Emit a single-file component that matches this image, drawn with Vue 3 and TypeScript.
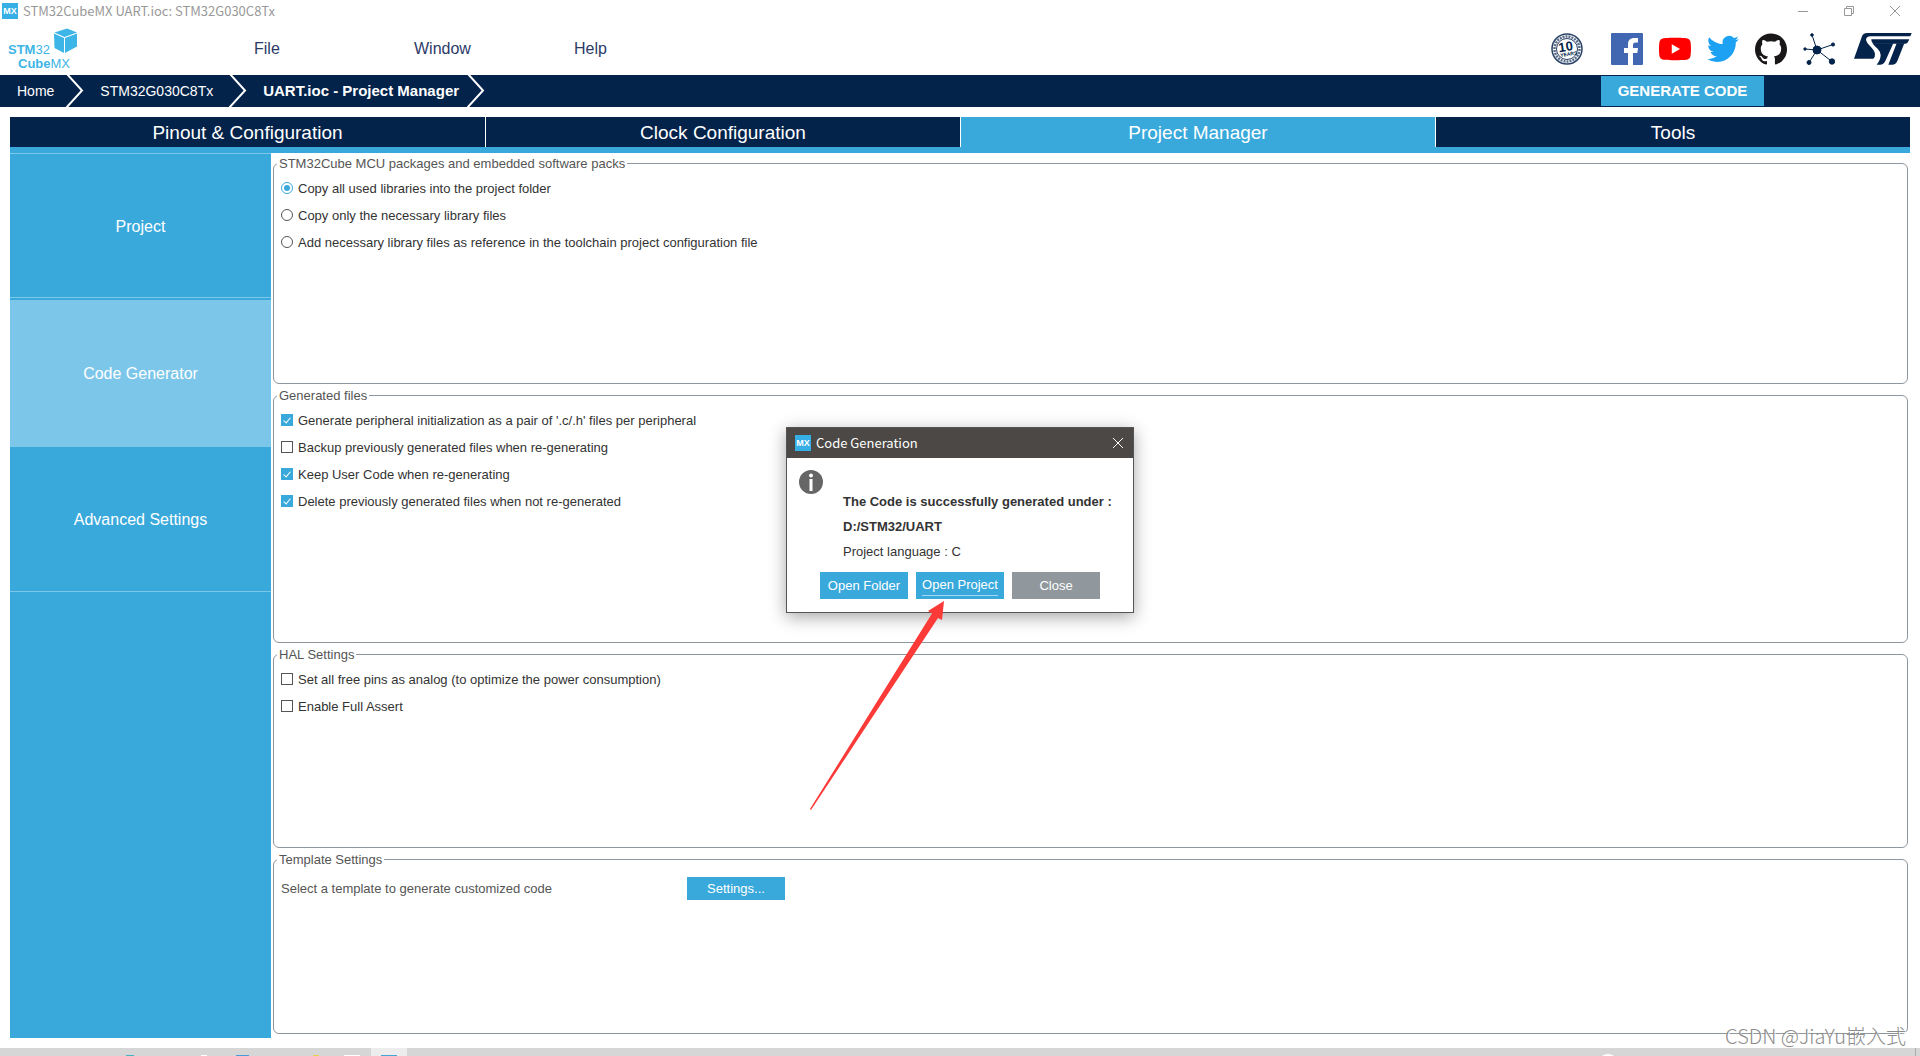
<script setup lang="ts">
import { ref } from 'vue'

interface Option {
  id: string
  label: string
  checked: boolean
}

const menus: string[] = ['File', 'Window', 'Help']
const crumbs: string[] = ['Home', 'STM32G030C8Tx', 'UART.ioc - Project Manager']
const tabs: string[] = ['Pinout & Configuration', 'Clock Configuration', 'Project Manager', 'Tools']
const activeTab = ref('Project Manager')
const sections: string[] = ['Project', 'Code Generator', 'Advanced Settings']
const activeSection = ref('Code Generator')

const copyMode = ref('all')
const copyModes = [
  { id: 'all', label: 'Copy all used libraries into the project folder' },
  { id: 'necessary', label: 'Copy only the necessary library files' },
  { id: 'reference', label: 'Add necessary library files as reference in the toolchain project configuration file' },
]

const generated = ref<Option[]>([
  { id: 'pair', label: "Generate peripheral initialization as a pair of '.c/.h' files per peripheral", checked: true },
  { id: 'backup', label: 'Backup previously generated files when re-generating', checked: false },
  { id: 'keep', label: 'Keep User Code when re-generating', checked: true },
  { id: 'delete', label: 'Delete previously generated files when not re-generated', checked: true },
])

const hal = ref<Option[]>([
  { id: 'analog', label: 'Set all free pins as analog (to optimize the power consumption)', checked: false },
  { id: 'assert', label: 'Enable Full Assert', checked: false },
])
</script>

<template>
  <div class="app">
    <div class="titlebar">
      <span class="mx">MX</span>
      <span class="title">STM32CubeMX UART.ioc: STM32G030C8Tx</span>
      <div class="window-controls">
        <button type="button" aria-label="Minimize">
          <svg width="10" height="10" viewBox="0 0 10 10"><path d="M0 5.5H10" /></svg>
        </button>
        <button type="button" aria-label="Restore">
          <svg width="10" height="10" viewBox="0 0 10 10"><path d="M.5 2.500H7.500V9.500H.5ZM2.500 2.500V.5H9.500V7.500H7.500" /></svg>
        </button>
        <button type="button" aria-label="Close">
          <svg width="10" height="10" viewBox="0 0 10 10"><path d="M0 0L10 10M10 0L0 10" /></svg>
        </button>
      </div>
    </div>

    <header class="header">
      <div class="brand">
        <svg width="90" height="53" viewBox="0 0 90 53" aria-label="STM32CubeMX">
          <path d="M54.500 10.500L67 6.500L77 10.500L64.500 15Z" fill="#3db5e6" />
          <path d="M54 11.500L64 16V31L54.500 26Z" fill="#3db5e6" />
          <path d="M65 16L77 11.500V24.500L65 31Z" fill="#3db5e6" />
          <text x="8" y="32" class="logo-text"><tspan class="strong">STM</tspan>32</text>
          <text x="18" y="46" class="logo-text"><tspan class="strong">Cube</tspan>MX</text>
        </svg>
      </div>
      <nav class="menu">
        <button v-for="m in menus" :key="m" type="button">{{ m }}</button>
      </nav>
      <div class="links">
        <a href="#" class="badge" aria-label="10 years commitment">
          <svg width="32" height="32" viewBox="0 0 32 32">
            <circle cx="16" cy="16" r="15" fill="#fff" stroke="#2b4366" stroke-width="1.500" />
            <circle cx="16" cy="16" r="12.500" fill="none" stroke="#5a6d89" stroke-width="2.500" stroke-dasharray="2 1" />
            <circle cx="16" cy="16" r="10.500" fill="#fff" stroke="#2b4366" />
            <text x="15" y="18" class="badge-ten" transform="rotate(-8 16 16)">10</text>
            <text x="17" y="23" class="badge-years" transform="rotate(-8 16 16)">YEARS</text>
          </svg>
        </a>
        <a href="#" aria-label="Facebook">
          <svg width="32" height="32" viewBox="0 0 32 32">
            <rect width="32" height="32" rx="1" fill="#4267b2" />
            <path d="M17 32V20H13V15H17V11.500C17 7 19.500 5 23.500 5H27V9.500H25C22.500 9.500 22 10.500 22 12.500V15H27L26.300 20H22V32Z" fill="#fff" />
          </svg>
        </a>
        <a href="#" aria-label="YouTube">
          <svg width="32" height="32" viewBox="0 0 24 24">
            <path fill="#f00" d="M23.498 6.186a3.016 3.016 0 0 0-2.122-2.136C19.505 3.545 12 3.545 12 3.545s-7.505 0-9.377.505A3.017 3.017 0 0 0 .502 6.186C0 8.070 0 12 0 12s0 3.930.502 5.814a3.016 3.016 0 0 0 2.122 2.136c1.871.505 9.376.505 9.376.505s7.505 0 9.377-.505a3.015 3.015 0 0 0 2.122-2.136C24 15.930 24 12 24 12s0-3.930-.502-5.814z" />
            <path fill="#fff" d="M9.545 15.568V8.432L15.818 12z" />
          </svg>
        </a>
        <a href="#" aria-label="Twitter">
          <svg width="32" height="32" viewBox="0 0 24 24">
            <path fill="#1da1f2" d="M23.953 4.570a10 10 0 0 1-2.825.775 4.958 4.958 0 0 0 2.163-2.723c-.951.555-2.005.959-3.127 1.184a4.920 4.920 0 0 0-8.384 4.482C7.690 8.095 4.067 6.130 1.640 3.162a4.822 4.822 0 0 0-.666 2.475c0 1.710.870 3.213 2.188 4.096a4.904 4.904 0 0 1-2.228-.616v.060a4.923 4.923 0 0 0 3.946 4.827 4.996 4.996 0 0 1-2.212.085 4.936 4.936 0 0 0 4.604 3.417 9.867 9.867 0 0 1-6.102 2.105c-.39 0-.779-.023-1.170-.067a13.995 13.995 0 0 0 7.557 2.209c9.053 0 13.998-7.496 13.998-13.985 0-.21 0-.42-.015-.63A9.935 9.935 0 0 0 24 4.590z" />
          </svg>
        </a>
        <a href="#" aria-label="GitHub">
          <svg width="32" height="32" viewBox="0 0 24 24">
            <path fill="#191717" d="M12 .297c-6.630 0-12 5.373-12 12 0 5.303 3.438 9.800 8.205 11.385.6.113.820-.258.820-.577 0-.285-.010-1.040-.015-2.040-3.338.724-4.042-1.610-4.042-1.610C4.422 18.070 3.633 17.700 3.633 17.700c-1.087-.744.084-.729.084-.729 1.205.084 1.838 1.236 1.838 1.236 1.070 1.835 2.809 1.305 3.495.998.108-.776.417-1.305.760-1.605-2.665-.3-5.466-1.332-5.466-5.930 0-1.310.465-2.380 1.235-3.220-.135-.303-.540-1.523.105-3.176 0 0 1.005-.322 3.300 1.230.960-.267 1.980-.399 3-.405 1.020.006 2.040.138 3 .405 2.280-1.552 3.285-1.230 3.285-1.230.645 1.653.240 2.873.120 3.176.765.840 1.230 1.910 1.230 3.220 0 4.610-2.805 5.625-5.475 5.920.420.360.810 1.096.810 2.220 0 1.606-.015 2.896-.015 3.286 0 .315.210.690.825.570C20.565 22.092 24 17.592 24 12.297c0-6.627-5.373-12-12-12" />
          </svg>
        </a>
        <a href="#" aria-label="Community">
          <svg width="32" height="32" viewBox="0 0 32 32" fill="#03234b" stroke="#03234b" stroke-width="1">
            <path d="M14 17L9 2M14 17L30 11.500M14 17L2 16M14 17L6 29.500M14 17L29 28.500" />
            <circle cx="14" cy="17" r="4" />
            <circle cx="9" cy="2" r="1.300" />
            <circle cx="30" cy="11.500" r="1.600" />
            <circle cx="2" cy="16" r="1.200" />
            <circle cx="6" cy="29.500" r="2" />
            <circle cx="29" cy="28.500" r="2.700" />
          </svg>
        </a>
        <a href="#" class="st" aria-label="STMicroelectronics">
          <svg width="58" height="32" viewBox="0 0 174 96" fill="#03234b">
            <path d="M0 77L24 10Q28 0 40 0H173L169 10H50Q36 11 36 21Q38 30 48 39Q61 52 63 62Q64 71 58 77Z" />
            <path d="M56 31H118L94 84Q89 95 78 95H68Q79 83 80 67Q80 56 71 47Q58 37 56 31Z" />
            <path d="M52 19H166L162 27Q159 32 154 32H57Q51 26 52 19Z" />
            <path d="M128 31H151L130 84Q126 95 114 95H103Z" />
          </svg>
        </a>
      </div>
    </header>

    <div class="navbar">
      <a v-for="(c, i) in crumbs" :key="c" href="#" class="crumb" :class="{ current: i === crumbs.length - 1 }">
        <span>{{ c }}</span>
        <svg width="18" height="32" viewBox="0 0 18 32"><path d="M1 -1L16 15.500L0 33" /></svg>
      </a>
      <button type="button" class="generate">GENERATE CODE</button>
    </div>

    <main class="content">
      <div class="tabs" role="tablist">
        <button
          v-for="t in tabs"
          :key="t"
          type="button"
          role="tab"
          :aria-selected="t === activeTab"
          :class="{ active: t === activeTab }"
          @click="activeTab = t"
        >{{ t }}</button>
      </div>

      <div class="workspace">
        <aside class="sidebar">
          <button
            v-for="s in sections"
            :key="s"
            type="button"
            :class="{ active: s === activeSection }"
            @click="activeSection = s"
          >{{ s }}</button>
        </aside>

        <form class="groups" @submit.prevent>
          <fieldset>
            <legend>STM32Cube MCU packages and embedded software packs</legend>
            <label v-for="m in copyModes" :key="m.id" class="row">
              <input v-model="copyMode" type="radio" name="copy-mode" :value="m.id" />
              <span>{{ m.label }}</span>
            </label>
          </fieldset>
          <fieldset>
            <legend>Generated files</legend>
            <label v-for="o in generated" :key="o.id" class="row">
              <input v-model="o.checked" type="checkbox" />
              <span>{{ o.label }}</span>
            </label>
          </fieldset>
          <fieldset>
            <legend>HAL Settings</legend>
            <label v-for="o in hal" :key="o.id" class="row">
              <input v-model="o.checked" type="checkbox" />
              <span>{{ o.label }}</span>
            </label>
          </fieldset>
          <fieldset>
            <legend>Template Settings</legend>
            <div class="template">
              <span>Select a template to generate customized code</span>
              <button type="button">Settings...</button>
            </div>
          </fieldset>
        </form>
      </div>
    </main>

    <footer class="taskbar">
      <svg width="420" height="8" viewBox="0 0 420 8">
        <rect x="371" width="36" height="8" fill="#ededed" />
        <rect x="126" y="7" width="8" height="1" fill="#45b5c4" />
        <rect x="201" y="7" width="6" height="1" fill="#fff" />
        <rect x="236" y="7" width="13" height="1" fill="#4a9bd9" />
        <rect x="313" y="7" width="6" height="1" fill="#e6d34d" />
        <rect x="344" y="7" width="16" height="1" fill="#fff" />
        <rect x="381" y="7" width="16" height="1" fill="#45a5d5" />
      </svg>
      <svg class="tray" width="320" height="8" viewBox="0 0 320 8">
        <circle cx="8" cy="16" r="10" fill="#fff" />
        <rect x="315" width="1" height="8" fill="#aaa" />
      </svg>
    </footer>

    <div class="watermark">CSDN @JiaYu嵌入式</div>

    <section class="dialog" role="dialog" aria-labelledby="dialog-title">
      <div class="dialog-bar">
        <span class="mx">MX</span>
        <span id="dialog-title" class="title">Code Generation</span>
        <button type="button" aria-label="Close dialog">
          <svg width="10" height="10" viewBox="0 0 10 10"><path d="M0 0L10 10M10 0L0 10" /></svg>
        </button>
      </div>
      <div class="dialog-body">
        <svg class="info" width="24" height="24" viewBox="0 0 24 24">
          <circle cx="12" cy="12" r="12" fill="#666" />
          <circle cx="12" cy="5.500" r="2" fill="#fff" />
          <rect x="10.500" y="9" width="3" height="12" fill="#fff" />
        </svg>
        <div class="message">
          <p><strong>The Code is successfully generated under :</strong></p>
          <p><strong>D:/STM32/UART</strong></p>
          <p>Project language : C</p>
        </div>
      </div>
      <div class="dialog-actions">
        <button type="button">Open Folder</button>
        <button type="button" class="focused"><span>Open Project</span></button>
        <button type="button" class="secondary">Close</button>
      </div>
      <svg class="arrow" width="140" height="212" viewBox="0 0 140 212">
        <path d="M136 0L120 10L124 12.500L2 208L3 209L130 17L134 19Z" fill="#fc3a38" />
      </svg>
    </section>
  </div>
</template>

<style>
body {
  margin: 0;
  background: #fff;
}
</style>

<style scoped>
.app {
  display: flex;
  flex-direction: column;
  position: relative;
  min-height: 100vh;
  overflow: hidden;
  box-sizing: border-box;
  background: #fff;
  color: #333;
  font: 13px/16px "Liberation Sans", Arial, sans-serif;
}

button {
  margin: 0;
  padding: 0;
  border: 0;
  background: none;
  color: inherit;
  font: inherit;
}

a {
  color: inherit;
  text-decoration: none;
}

svg {
  display: block;
}

.mx {
  width: 16px;
  height: 16px;
  background: #36b0e4;
  color: #fff;
  font: bold 9px/16px "Liberation Sans", sans-serif;
  text-align: center;
}

.titlebar {
  display: flex;
  align-items: center;
  height: 22px;
  padding-left: 2px;
  color: #999;
}

.title {
  margin-left: 5px;
  font: 13px/16px "Noto Sans CJK SC", "Noto Sans", sans-serif;
}

.window-controls {
  display: flex;
  height: 20px;
  margin-left: auto;
  padding-right: 2px;
}

.window-controls button {
  display: grid;
  place-items: center;
  width: 46px;
}

.window-controls path {
  fill: none;
  stroke: #999;
}

.header {
  display: flex;
  align-items: center;
  height: 53px;
}

.brand {
  width: 254px;
}

.logo-text {
  font: 13px "Liberation Sans", sans-serif;
  fill: #3db5e6;
}

.logo-text .strong {
  font-weight: bold;
}

.menu {
  display: flex;
}

.menu button {
  width: 160px;
  color: #2b3a66;
  font-size: 16px;
  line-height: 20px;
  text-align: left;
}

.links {
  display: flex;
  gap: 16px;
  margin-left: auto;
  padding-right: 8px;
}

.links .badge {
  margin-right: 12px;
}

.links .st {
  margin-left: 3px;
}

.badge-ten {
  font: bold 13px "Liberation Sans", sans-serif;
  fill: #03234b;
  text-anchor: middle;
}

.badge-years {
  font: bold 5px "Liberation Sans", sans-serif;
  fill: #03234b;
  text-anchor: middle;
}

.navbar {
  display: flex;
  align-items: center;
  height: 32px;
  padding-left: 17px;
  background: #03234b;
  color: #fff;
  font-size: 14px;
}

.crumb {
  display: flex;
  align-items: center;
  gap: 12px;
  margin-right: 16px;
}

.crumb + .crumb {
  gap: 16px;
}

.crumb.current {
  gap: 8px;
  font-size: 15px;
  font-weight: bold;
}

.crumb path {
  fill: none;
  stroke: #fff;
  stroke-width: 2;
}

.generate {
  width: 163px;
  height: 30px;
  margin-left: auto;
  margin-right: 156px;
  background: #39a9dc;
  font-size: 15px;
  font-weight: bold;
}

.content {
  display: flex;
  flex: 1;
  flex-direction: column;
  padding: 10px;
}

.tabs {
  display: grid;
  grid-template-columns: repeat(4, 1fr);
  border-bottom: 6px solid #39a9dc;
}

.tabs button {
  height: 30px;
  padding-top: 2px;
  border-left: 1px solid #fff;
  background: #03234b;
  color: #fff;
  font-size: 19px;
  line-height: 28px;
}

.tabs button:first-child {
  border-left: 0;
}

.tabs button.active {
  background: #39a9dc;
}

.workspace {
  display: flex;
  flex: 1;
}

.sidebar {
  display: flex;
  flex-direction: column;
  width: 261px;
  border-top: 1px solid #7cc6ea;
  box-sizing: border-box;
  background: #39a9dc;
  color: #fff;
}

.sidebar button {
  height: 145px;
  padding-top: 2px;
  border-bottom: 1px solid #7cc6ea;
  font-size: 16px;
}

.sidebar button:first-child {
  height: 144px;
}

.sidebar button.active {
  height: 147px;
  margin-top: 2px;
  padding-top: 0;
  border-bottom: 0;
  background: #7cc6ea;
}

.groups {
  display: grid;
  flex: 1;
  grid-template-rows: 229fr 256fr 202fr 183fr;
  gap: 3px;
  padding: 2px 2px 4px;
}

fieldset {
  min-width: 0;
  margin: 0;
  padding: 3px 7px 0;
  border: 1px solid #8f979e;
  border-radius: 6px;
}

legend {
  height: 16px;
  margin-left: -4px;
  padding-right: 2px;
  color: #555;
  line-height: 18px;
}

.row {
  display: flex;
  gap: 5px;
  width: fit-content;
  height: 27px;
  padding-top: 6px;
  box-sizing: border-box;
  line-height: 18px;
}

.row input {
  display: grid;
  place-items: center;
  width: 12px;
  height: 12px;
  margin: 2px 0 0;
  border: 1px solid #555;
  appearance: none;
  box-sizing: border-box;
  background: #fff;
}

.row input[type="radio"] {
  border-radius: 50%;
}

.row input:checked {
  border-color: #39a9dc;
}

.row input[type="radio"]:checked::after {
  width: 6px;
  height: 6px;
  border-radius: 50%;
  background: #39a9dc;
  content: "";
}

.row input[type="checkbox"]:checked {
  background: #39a9dc;
}

.row input[type="checkbox"]:checked::after {
  width: 3px;
  height: 6px;
  margin-bottom: 2px;
  border: solid #fff;
  border-width: 0 1px 1px 0;
  content: "";
  transform: rotate(40deg);
}

.template {
  display: flex;
  align-items: center;
  height: 37px;
  color: #555;
}

.template span {
  width: 406px;
}

.template button {
  width: 98px;
  height: 23px;
  background: #39a9dc;
  color: #fff;
}

.taskbar {
  display: flex;
  height: 8px;
  background: #d6d6d6;
}

.tray {
  margin-left: auto;
}

.watermark {
  position: absolute;
  right: 14px;
  bottom: 8px;
  color: #8c8c8c;
  font: 300 20px/24px "Noto Sans CJK SC", sans-serif;
  text-shadow: 1px 1px 0 #fff;
}

.dialog {
  position: absolute;
  top: 427px;
  left: calc(50% - 174px);
  width: 348px;
  border: 1px solid #555;
  box-sizing: border-box;
  background: #fff;
  box-shadow: 0 4px 16px rgba(0, 0, 0, 0.35);
}

.dialog-bar {
  display: flex;
  align-items: center;
  height: 30px;
  padding: 0 10px 0 8px;
  background: #4b4845;
  color: #fff;
}

.dialog-bar button {
  margin-left: auto;
}

.dialog-bar path {
  stroke: #fff;
}

.dialog-body {
  display: flex;
  gap: 20px;
  padding: 12px 12px 0;
}

.message {
  padding-top: 19px;
}

.message p {
  margin: 0;
  line-height: 25px;
  white-space: nowrap;
}

.dialog-actions {
  display: flex;
  justify-content: center;
  gap: 8px;
  padding: 8px 0 13px;
}

.dialog-actions button {
  width: 88px;
  height: 27px;
  background: #39a9dc;
  color: #fff;
}

.dialog-actions .focused span {
  display: block;
  margin: 0 6px;
  border-bottom: 1px solid #a5d8f0;
  line-height: 20px;
}

.dialog-actions .secondary {
  background: #90989e;
}

.arrow {
  position: absolute;
  top: 173px;
  left: 21px;
  pointer-events: none;
}
</style>
